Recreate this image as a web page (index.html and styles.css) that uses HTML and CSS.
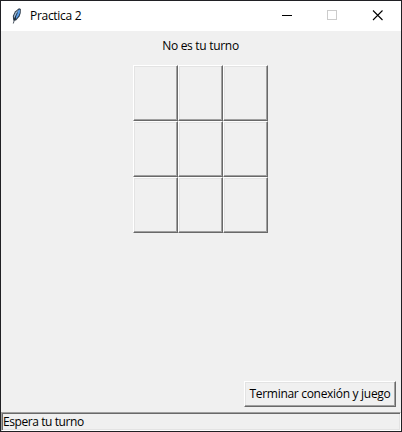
FILE: index.html
```
<!DOCTYPE html>
<html lang="es">
<head>
<meta charset="utf-8">
<title>Practica 2</title>
<link rel="stylesheet" href="styles.css">
</head>
<body>
<div class="window">
  <header class="titlebar">
    <svg class="feather" width="16" height="16" viewBox="0 0 16 16">
      <path d="M10 .3 11.800 1 11.700 5 10.500 8.500 7 12.500 4.300 12.500 3.800 8 6 3.500Z" fill="#263443"/>
      <path d="M10 1.300 11 2 10.800 5 9.500 8 7 11 6.800 7Z" fill="#5a9ee8"/>
      <path d="M9.500 1.500 6.500 4.500 4.800 8 5 10.800 7.500 6Z" fill="#9db9d4"/>
      <path d="M8.500 4.500 5.800 10.500 4.300 15.500" fill="none" stroke="#1c2938" stroke-width=".8"/>
    </svg>
    <h1 class="title">Practica 2</h1>
    <div class="controls">
      <svg width="46" height="30" shape-rendering="crispEdges"><path d="M18 14h10v1H18z" fill="#000"/></svg>
      <svg width="46" height="30" shape-rendering="crispEdges"><path d="M17.500 9.500h9v9h-9z" fill="none" stroke="#ccc"/></svg>
      <svg width="46" height="30"><path d="M17 9.500l9.500 9.500M26.500 9.500l-9.500 9.500" fill="none" stroke="#000" stroke-width="1.100"/></svg>
    </div>
  </header>
  <main class="content">
    <p class="turn"><span>No es tu turno</span></p>
    <div class="board">
      <button class="cell"></button><button class="cell"></button><button class="cell"></button>
      <button class="cell"></button><button class="cell"></button><button class="cell"></button>
      <button class="cell"></button><button class="cell"></button><button class="cell"></button>
    </div>
    <button class="quit"><span>Terminar conexión y juego</span></button>
  </main>
  <footer class="status"><span>Espera tu turno</span></footer>
</div>
</body>
</html>
```
FILE: styles.css
```
* { box-sizing: border-box; }
body {
  margin: 0;
  font: 12px/16px "Open Sans", "Noto Sans", sans-serif;
  color: #000;
}
.window {
  width: 402px;
  height: 432px;
  border: 1px solid #202024;
  background: #f0f0f0;
  display: flex;
  flex-direction: column;
}
.titlebar {
  height: 30px;
  background: #fff;
  display: flex;
  align-items: center;
  padding-left: 8px;
}
.feather { margin-right: 5px; }
.title {
  margin: 0;
  font-size: 12px;
  font-weight: 400;
  letter-spacing: -.3px;
}
.controls { margin-left: auto; display: flex; margin-right: -1px; }
.content {
  flex: 1;
  display: flex;
  flex-direction: column;
  align-items: center;
  padding: 7px 5px 5px 4px;
}
.turn { margin: 0 0 11px; letter-spacing: -.3px; }
.board {
  display: grid;
  grid-template-columns: repeat(3, 45px);
  grid-auto-rows: 56px;
  margin-right: 1px;
}
.cell, .quit {
  margin: 0;
  padding: 0;
  border: 1px solid;
  border-color: #fff #696969 #696969 #fff;
  box-shadow: inset -1px -1px #a0a0a0, inset 1px 1px #e3e3e3;
  background: #f0f0f0;
  border-radius: 0;
}
.quit {
  margin-top: auto;
  align-self: flex-end;
  width: 152px;
  height: 26px;
  font: inherit;
  color: #000;
  letter-spacing: -.3px;
  white-space: nowrap;
}
.status {
  height: 19px;
  border: 1px solid;
  border-color: #a0a0a0 #fff #fff #a0a0a0;
  box-shadow: inset 1px 1px #696969, inset -1px -1px #e3e3e3;
  padding: 1px 0 0 1px;
  letter-spacing: -.42px;
}
```
